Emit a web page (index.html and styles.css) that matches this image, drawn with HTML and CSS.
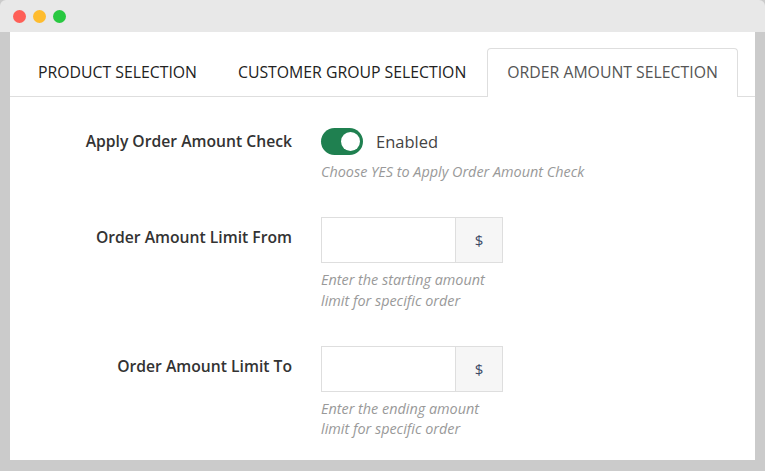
FILE: index.html
```html
<!DOCTYPE html>
<html>
<head>
<meta charset="utf-8">
<link rel="stylesheet" href="styles.css">
</head>
<body>
<div class="window">
  <div class="titlebar">
    <span class="dot red"></span>
    <span class="dot yellow"></span>
    <span class="dot green"></span>
  </div>
  <div class="frame">
    <div class="panel">
      <div class="tabs">
        <div class="tab">PRODUCT SELECTION</div>
        <div class="tab">CUSTOMER GROUP SELECTION</div>
        <div class="tab active">ORDER AMOUNT SELECTION</div>
      </div>
      <div class="form">
        <div class="row row-toggle">
          <div class="label">Apply Order Amount Check</div>
          <div class="field">
            <div class="toggle-line">
              <span class="toggle"><span class="knob"></span></span>
              <span class="toggle-text">Enabled</span>
            </div>
            <div class="help">Choose YES to Apply Order Amount Check</div>
          </div>
        </div>
        <div class="row">
          <div class="label label-input">Order Amount Limit From</div>
          <div class="field narrow">
            <div class="input-group">
              <span class="input"></span>
              <span class="addon">$</span>
            </div>
            <div class="help">Enter the starting amount limit for specific order</div>
          </div>
        </div>
        <div class="row">
          <div class="label label-input">Order Amount Limit To</div>
          <div class="field narrow">
            <div class="input-group">
              <span class="input"></span>
              <span class="addon">$</span>
            </div>
            <div class="help">Enter the ending amount limit for specific order</div>
          </div>
        </div>
      </div>
    </div>
  </div>
</div>
</body>
</html>
```

FILE: styles.css
```css
* { box-sizing: border-box; }
html, body { margin: 0; padding: 0; }
body {
  width: 765px;
  height: 471px;
  overflow: hidden;
  background: #cbcbcb;
  font-family: "Open Sans", "Liberation Sans", sans-serif;
}
.window { width: 765px; height: 471px; }
.titlebar {
  height: 32px;
  background: #e8e8e8;
  border-radius: 6px 6px 0 0;
  display: flex;
  align-items: center;
  gap: 7px;
  padding-left: 13px;
  padding-top: 1px;
}
.dot { width: 13px; height: 13px; border-radius: 50%; display: block; }
.red { background: #fe5f57; }
.yellow { background: #febc2e; }
.green { background: #28c840; }
.frame {
  height: 439px;
  padding: 0 10px 11px 10px;
  background: #cbcbcb;
}
.panel {
  background: #fff;
  height: 428px;
  overflow: hidden;
}
.tabs {
  display: flex;
  padding: 16px 0 0 8px;
  border-bottom: 1px solid #dedede;
  height: 65px;
}
.tab {
  height: 49px;
  padding: 0 20px 2px 20px;
  margin-right: 1px;
  display: flex;
  align-items: center;
  font-size: 15.8px;
  color: #222;
  white-space: nowrap;
}
.tab.active {
  color: #555;
  border: 1px solid #dedede;
  border-bottom: none;
  padding: 0 19px 2px 19px;
  border-radius: 4px 4px 0 0;
  background: #fff;
  margin-bottom: -1px;
}
.form { padding-top: 31px; }
.row { display: flex; margin-bottom: 34.5px; }
.label {
  width: 311px;
  padding-right: 29px;
  text-align: right;
  font-size: 15.7px;
  font-weight: 600;
  line-height: 22px;
  color: #333;
}
.row-toggle .label { padding-top: 2px; }
.label-input { padding-top: 9px; }
.field { display: flex; flex-direction: column; }
.field.narrow { width: 182px; }
.toggle-line { display: flex; align-items: center; height: 27px; }
.toggle {
  width: 42px;
  height: 27px;
  border-radius: 14px;
  background: #1f8050;
  position: relative;
  display: block;
}
.knob {
  position: absolute;
  right: 3px;
  top: 4px;
  width: 19px;
  height: 19px;
  border-radius: 50%;
  background: #fff;
}
.toggle-text {
  margin-left: 13px;
  font-size: 16.5px;
  font-weight: 500;
  color: #444;
}
.help {
  margin-top: 7px;
  font-size: 14.4px;
  line-height: 20.5px;
  font-style: italic;
  color: #999;
}
.input-group { display: flex; height: 46px; }
.input {
  flex: 1;
  border: 1px solid #dedede;
  border-right: none;
  background: #fff;
}
.addon {
  width: 48px;
  border: 1px solid #dedede;
  background: #f6f6f6;
  color: #3d4a66;
  font-size: 15px;
  display: flex;
  align-items: center;
  justify-content: center;
}
```
